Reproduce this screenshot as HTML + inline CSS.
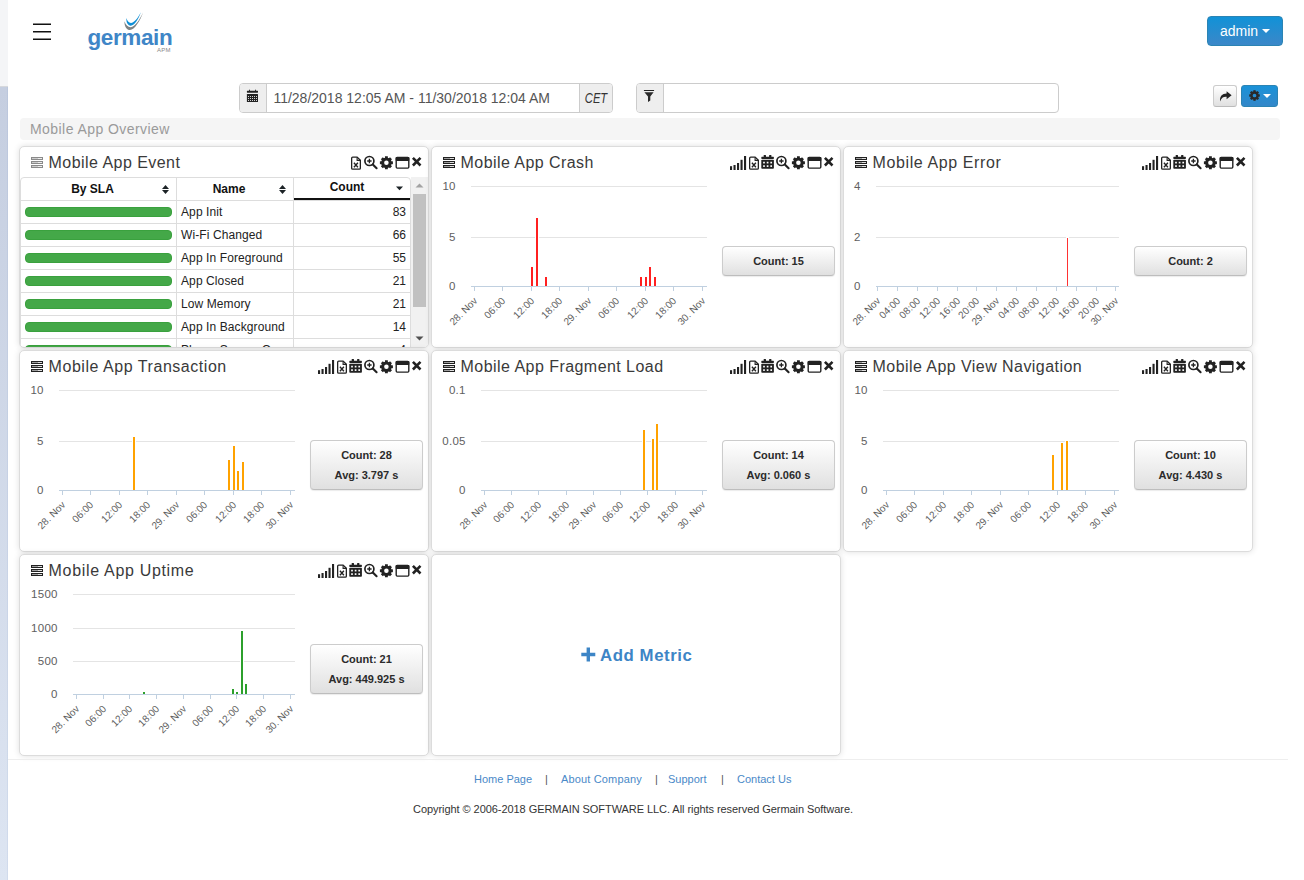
<!DOCTYPE html>
<html lang="en"><head><meta charset="utf-8"><title>Mobile App Overview</title>
<style>
*{box-sizing:border-box}
html,body{margin:0;padding:0}
body{width:1304px;height:880px;overflow:hidden;background:#fff;font-family:"Liberation Sans", Arial, sans-serif;color:#333;position:relative}
.abs{position:absolute}
.panel{position:absolute;width:410px;height:202px;background:#fff;border:1px solid #dcdcdc;border-radius:5px;box-shadow:0 0 6px rgba(0,0,0,.13);overflow:hidden}
.panel>*{position:absolute}
.li{left:11px;top:10px}
.ttl{left:28.600px;top:5.5px;font-size:16px;line-height:20px;white-space:nowrap;color:#3a3a3a;letter-spacing:.33px}
.hic{left:-1px;top:-1px}
.ch{left:-1px;top:-1px}
.stat{left:290px;width:113px;border:1px solid #ccc;border-bottom-color:#bdbdbd;border-radius:4px;background:linear-gradient(#fff,#e0e0e0);font-weight:bold;font-size:11px;line-height:20px;padding:4px 0;text-align:center;color:#2b2b2b;box-shadow:0 1px 1px rgba(0,0,0,.08)}
.tw{left:0;top:30px;width:408px;height:170px;overflow:hidden}
.tb{position:absolute;left:0;top:0;width:391px;border-collapse:separate;border:1px solid #ddd;border-radius:4px 4px 0 0;font-size:12px;table-layout:fixed}
.tb th{height:23px;border-bottom:1px solid #ddd;border-right:1px solid #ddd;font-size:12px;font-weight:bold;color:#111;text-align:center;position:relative;padding:0}
.tb th.cnt{border-right:0;border-bottom:1px solid #ddd;box-shadow:inset 0 -2px 0 #111;height:23px;vertical-align:top;line-height:19.500px}
.tb td{height:23px;border-bottom:1px solid #ddd;border-right:1px solid #ddd;padding:0;line-height:22px}
.tb td:last-child{border-right:0}
.bar{height:10px;width:147px;margin-left:4px;border-radius:4px;background:#44a848;border:1px solid #3aa13e}
.nm{padding-left:4px!important;color:#222;letter-spacing:.1px}
.num{text-align:right;padding-right:4px!important;color:#222}
.srt{position:absolute;right:7px;top:7px}
.sb{position:absolute;left:391px;top:0;width:17px;height:170px;background:#f1f1f1}
.thumb{position:absolute;left:2px;top:17px;width:13px;height:113px;background:#c1c1c1}
.add{left:0;top:0;width:408px;height:200px}
.addt{position:absolute;left:168px;top:88.500px;letter-spacing:.58px;font-size:16.8px;font-weight:bold;color:#3d85c6;line-height:24px;white-space:nowrap}
.ft{font-size:11px;line-height:14px;white-space:nowrap}
</style></head>
<body>

<div class="abs" style="left:0;top:0;width:8px;height:86px;background:#f4f5f7"></div>
<div class="abs" style="left:0;top:86px;width:8px;height:1px;background:#d6d8dc"></div>
<div class="abs" style="left:0;top:87px;width:8px;height:793px;background:linear-gradient(#c5cee0,#dde5f2);box-shadow:inset -1px 0 0 rgba(110,140,190,.10)"></div>
<svg class="abs" style="left:33px;top:20px" width="18" height="24" viewBox="0 0 18 24"><path d="M0 3.400h18v1.700h-18zM0 10.900h18v1.700h-18zM0 18.400h18v1.700h-18z" fill="#111"/></svg>
<div class="abs" style="left:87.500px;top:24.500px;font-size:22.5px;font-weight:bold;color:#3f86c7;letter-spacing:-.4px;line-height:26px">germain</div>
<svg class="abs" style="left:120px;top:8px" width="28" height="26" viewBox="0 0 28 26"><path d="M4.500 13.200C4.200 18.800 7 22 10 22C14.500 22 20 13 23.200 4.300C19.800 11.500 14.800 19.200 10.800 19.200C7.800 19.200 5.600 16.800 4.500 13.200Z" fill="#7d8384"/><path d="M6.400 10.100C6 15.500 8.500 17.800 10.800 17.700C14.500 17.600 18.500 11 20.900 4.300C18 10 14 15 11 15C8.800 15 7.200 13 6.400 10.100Z" fill="#0e8fd6"/></svg>
<div class="abs" style="left:157px;top:47px;font-size:6px;color:#888;line-height:7px;letter-spacing:.2px">APM</div>
<div class="abs" style="left:1207px;top:16px;width:76px;height:30px;border:1px solid #2b84b4;border-radius:4px;background:linear-gradient(#1192d7,#3b87c8);color:#fff;font-size:14px;line-height:28px;padding-left:12px">admin<svg width="8" height="4" viewBox="0 0 8 4" style="position:absolute;left:54px;top:12px"><path d="M0 0h8l-4 4z" fill="#fff"/></svg></div>

<div class="abs" style="left:239px;top:83px;width:374px;height:30px;border:1px solid #ccc;border-radius:4px;background:#fff;overflow:hidden">
 <div class="abs" style="left:0;top:0;width:27px;height:28px;background:#eee;border-right:1px solid #ccc"></div>
 <svg class="abs" style="left:6px;top:5px" width="14" height="15" viewBox="0 0 14 15"><rect x="3.100" y=".7" width=".9" height="1.4" fill="#222"/><rect x="9.100" y=".7" width=".9" height="1.4" fill="#222"/><rect x=".9" y="1.700" width="11.100" height="2" rx=".4" fill="#222"/><rect x=".9" y="5.100" width="11.100" height="7.800" rx=".5" fill="#222"/><rect x="2.05" y="7.05" width=".9" height=".9" fill="#fff"/><rect x="4.05" y="7.05" width=".9" height=".9" fill="#fff"/><rect x="6.05" y="7.05" width=".9" height=".9" fill="#fff"/><rect x="8.05" y="7.05" width=".9" height=".9" fill="#fff"/><rect x="10.05" y="7.05" width=".9" height=".9" fill="#fff"/><rect x="2.05" y="9.05" width=".9" height=".9" fill="#fff"/><rect x="4.05" y="9.05" width=".9" height=".9" fill="#fff"/><rect x="6.05" y="9.05" width=".9" height=".9" fill="#fff"/><rect x="8.05" y="9.05" width=".9" height=".9" fill="#fff"/><rect x="10.05" y="9.05" width=".9" height=".9" fill="#fff"/><rect x="2.05" y="11.05" width=".9" height=".9" fill="#fff"/><rect x="4.05" y="11.05" width=".9" height=".9" fill="#fff"/><rect x="6.05" y="11.05" width=".9" height=".9" fill="#fff"/><rect x="8.05" y="11.05" width=".9" height=".9" fill="#fff"/><rect x="10.05" y="11.05" width=".9" height=".9" fill="#fff"/></svg>
 <div class="abs" style="left:33.400px;top:0;font-size:14px;line-height:28px;color:#555;white-space:nowrap">11/28/2018 12:05 AM - 11/30/2018 12:04 AM</div>
 <div class="abs" style="left:339px;top:0;width:33px;height:28px;background:#eee;border-left:1px solid #ccc;font-style:italic;font-size:14px;line-height:28px;text-align:center;color:#333"><span style="display:inline-block;transform:scaleX(.8);transform-origin:50% 50%">CET</span></div>
</div>
<div class="abs" style="left:636px;top:83px;width:423px;height:30px;border:1px solid #ccc;border-radius:4px;background:#fff;overflow:hidden">
 <div class="abs" style="left:0;top:0;width:27px;height:28px;background:#eee;border-right:1px solid #ccc"></div>
 <svg class="abs" style="left:5px;top:5px" width="14" height="15" viewBox="0 0 14 15"><rect x="1.900" y="1" width="10.200" height="1" rx=".3" fill="#222"/><path d="M2.400 3.200H11.600L8.300 7.600V11.400L6 13V7.600Z" fill="#2a2a2a"/></svg>
</div>
<div class="abs" style="left:1213px;top:85px;width:24px;height:22px;border:1px solid #ccc;border-bottom-color:#bbb;border-radius:3px;background:linear-gradient(#fff,#e0e0e0)">
 <svg class="abs" style="left:5px;top:5px" width="13" height="11" viewBox="0 0 13 11"><path d="M7.600 .2l5 4-5 4v-2.400c-3.200-.2-5.200.8-6.400 4.600-.8-4.800 2-7.800 6.400-7.800z" fill="#222"/></svg>
</div>
<div class="abs" style="left:1241px;top:85px;width:37px;height:22px;border:1px solid #2b84b4;border-radius:3px;background:linear-gradient(#1a92d8,#3387c9)">
 <svg class="abs" style="left:6.200px;top:2.900px" width="13" height="13" viewBox="0 0 13 13"><circle cx="6.5" cy="6.5" r="3.07" fill="none" stroke="#2a2a2a" stroke-width="2.44"/><rect x="5.33" y="1.20" width="2.33" height="2.23" fill="#2a2a2a" transform="rotate(0 6.5 6.5)"/><rect x="5.33" y="1.20" width="2.33" height="2.23" fill="#2a2a2a" transform="rotate(45 6.5 6.5)"/><rect x="5.33" y="1.20" width="2.33" height="2.23" fill="#2a2a2a" transform="rotate(90 6.5 6.5)"/><rect x="5.33" y="1.20" width="2.33" height="2.23" fill="#2a2a2a" transform="rotate(135 6.5 6.5)"/><rect x="5.33" y="1.20" width="2.33" height="2.23" fill="#2a2a2a" transform="rotate(180 6.5 6.5)"/><rect x="5.33" y="1.20" width="2.33" height="2.23" fill="#2a2a2a" transform="rotate(225 6.5 6.5)"/><rect x="5.33" y="1.20" width="2.33" height="2.23" fill="#2a2a2a" transform="rotate(270 6.5 6.5)"/><rect x="5.33" y="1.20" width="2.33" height="2.23" fill="#2a2a2a" transform="rotate(315 6.5 6.5)"/></svg>
 <svg class="abs" style="left:20.600px;top:7.900px" width="8" height="4" viewBox="0 0 8 4"><path d="M0 0h8l-4 4z" fill="#fff"/></svg>
</div>
<div class="abs" style="left:20px;top:118px;width:1260px;height:22px;background:#f5f5f5;border-radius:4px;font-size:14px;line-height:22px;padding-left:10px;color:#9a9a9a;letter-spacing:.44px">Mobile App Overview</div>
<div class="panel" style="left:19px;top:146px"><svg class="li" width="14" height="13" viewBox="0 0 14 13"><rect x="0" y="0" width="12" height="3" fill="#8a8a8a"/><rect x="1" y="1" width="10" height="1" fill="#fff" opacity=".85"/><rect x="1" y="1" width="6" height="1" fill="#8a8a8a" opacity=".35"/><rect x="0" y="4" width="12" height="3" fill="#8a8a8a"/><rect x="1" y="5" width="10" height="1" fill="#fff" opacity=".85"/><rect x="1" y="5" width="6" height="1" fill="#8a8a8a" opacity=".35"/><rect x="0" y="8" width="12" height="3" fill="#8a8a8a"/><rect x="1" y="9" width="10" height="1" fill="#fff" opacity=".85"/><rect x="1" y="9" width="6" height="1" fill="#8a8a8a" opacity=".35"/></svg><div class="ttl" style="letter-spacing:0.45px">Mobile App Event</div><svg class="hic" width="410" height="30" viewBox="0 0 410 30"><path d="M333.6 11.15h4.600l3.150 3.150v7.900a1 1 0 0 1 -1 1h-6.700a1 1 0 0 1 -1 -1v-10a1 1 0 0 1 1 -1z" fill="none" stroke="#222" stroke-width="1.3" stroke-linejoin="round"/><path d="M338.1 11.3v3.100h3.100" fill="none" stroke="#222" stroke-width="1.1"/><path d="M334.9 16.8l4 4.500m0-4.500l-4 4.500" stroke="#222" stroke-width="1.35" fill="none"/><circle cx="350.4" cy="15.0" r="4.5" fill="none" stroke="#222" stroke-width="1.7"/><path d="M353.8 18.4L357.6 22.2" stroke="#222" stroke-width="2.1" stroke-linecap="round"/><path d="M348.2 15.0h4.4M350.4 12.8v4.4" stroke="#222" stroke-width="1.3"/><circle cx="367.4" cy="16.75" r="3.77" fill="none" stroke="#222" stroke-width="2.99"/><rect x="365.97" y="10.25" width="2.86" height="2.73" fill="#222" transform="rotate(0 367.4 16.75)"/><rect x="365.97" y="10.25" width="2.86" height="2.73" fill="#222" transform="rotate(45 367.4 16.75)"/><rect x="365.97" y="10.25" width="2.86" height="2.73" fill="#222" transform="rotate(90 367.4 16.75)"/><rect x="365.97" y="10.25" width="2.86" height="2.73" fill="#222" transform="rotate(135 367.4 16.75)"/><rect x="365.97" y="10.25" width="2.86" height="2.73" fill="#222" transform="rotate(180 367.4 16.75)"/><rect x="365.97" y="10.25" width="2.86" height="2.73" fill="#222" transform="rotate(225 367.4 16.75)"/><rect x="365.97" y="10.25" width="2.86" height="2.73" fill="#222" transform="rotate(270 367.4 16.75)"/><rect x="365.97" y="10.25" width="2.86" height="2.73" fill="#222" transform="rotate(315 367.4 16.75)"/><rect x="377.2" y="11.5" width="12.6" height="10.6" rx="1" fill="none" stroke="#222" stroke-width="1.4"/><rect x="376.7" y="11.0" width="13.6" height="4" rx=".8" fill="#222"/><path d="M393.90000000000003 11.9l7.6 7.6m0-7.6l-7.6 7.6" stroke="#222" stroke-width="2.6" fill="none"/></svg><div class="tw"><table class="tb" cellspacing="0"><tr><th style="width:156px"><span style="position:relative;left:-6px">By SLA</span><svg class="srt" width="7" height="9" viewBox="0 0 7 9"><path d="M0 3.900l3.500-3.900 3.500 3.900zM0 5.100l3.500 3.900 3.500-3.900z" fill="#1c2326"/></svg></th><th style="width:117px"><span style="position:relative;left:-6px">Name</span><svg class="srt" width="7" height="9" viewBox="0 0 7 9"><path d="M0 3.900l3.500-3.900 3.500 3.900zM0 5.100l3.500 3.900 3.500-3.900z" fill="#1c2326"/></svg></th><th class="cnt"><span style="position:relative;left:-5px">Count</span><svg class="srt" style="top:8px" width="7" height="5" viewBox="0 0 7 5"><path d="M0 .5l3.500 3.800 3.500-3.800z" fill="#1c2326"/></svg></th></tr><tr><td><div class="bar"></div></td><td class="nm">App Init</td><td class="num">83</td></tr><tr><td><div class="bar"></div></td><td class="nm">Wi-Fi Changed</td><td class="num">66</td></tr><tr><td><div class="bar"></div></td><td class="nm">App In Foreground</td><td class="num">55</td></tr><tr><td><div class="bar"></div></td><td class="nm">App Closed</td><td class="num">21</td></tr><tr><td><div class="bar"></div></td><td class="nm">Low Memory</td><td class="num">21</td></tr><tr><td><div class="bar"></div></td><td class="nm">App In Background</td><td class="num">14</td></tr><tr><td><div class="bar"></div></td><td class="nm">Phone Screen On</td><td class="num">4</td></tr></table><div class="sb"><svg width="17" height="17" viewBox="0 0 17 17" style="position:absolute;left:0;top:0"><path d="M4.5 10.5l4-4 4 4z" fill="#a3a3a3"/></svg><div class="thumb"></div><svg width="17" height="17" viewBox="0 0 17 17" style="position:absolute;left:0;bottom:0"><path d="M4.5 6.5l4 4 4-4z" fill="#505050"/></svg></div></div></div><div class="panel" style="left:431px;top:146px"><svg class="li" width="14" height="13" viewBox="0 0 14 13"><rect x="0" y="0" width="12" height="3" fill="#222"/><rect x="1" y="1" width="10" height="1" fill="#fff" opacity=".85"/><rect x="1" y="1" width="6" height="1" fill="#222" opacity=".35"/><rect x="0" y="4" width="12" height="3" fill="#222"/><rect x="1" y="5" width="10" height="1" fill="#fff" opacity=".85"/><rect x="1" y="5" width="6" height="1" fill="#222" opacity=".35"/><rect x="0" y="8" width="12" height="3" fill="#222"/><rect x="1" y="9" width="10" height="1" fill="#fff" opacity=".85"/><rect x="1" y="9" width="6" height="1" fill="#222" opacity=".35"/></svg><div class="ttl" style="letter-spacing:0.43px">Mobile App Crash</div><svg class="hic" width="410" height="30" viewBox="0 0 410 30"><rect x="299.0" y="20.2" width="2.1" height="3.8" fill="#222"/><rect x="302.5" y="19.0" width="2.1" height="5" fill="#222"/><rect x="306.0" y="17.0" width="2.1" height="7" fill="#222"/><rect x="309.5" y="13.8" width="2.1" height="10.2" fill="#222"/><rect x="313.0" y="10.0" width="2.1" height="14" fill="#222"/><path d="M319.6 11.15h4.600l3.150 3.150v7.900a1 1 0 0 1 -1 1h-6.700a1 1 0 0 1 -1 -1v-10a1 1 0 0 1 1 -1z" fill="none" stroke="#222" stroke-width="1.3" stroke-linejoin="round"/><path d="M324.1 11.3v3.100h3.100" fill="none" stroke="#222" stroke-width="1.1"/><path d="M320.9 16.8l4 4.500m0-4.500l-4 4.500" stroke="#222" stroke-width="1.35" fill="none"/><g transform="translate(330.3 9.1) scale(1 1.0)"><rect x="2.4" y="0" width="2.3" height="2.6" rx=".5" fill="#222"/><rect x="7.800" y="0" width="2.3" height="2.6" rx=".5" fill="#222"/><rect x="0" y="1.7" width="12.6" height="2.1" rx=".6" fill="#222"/><rect x="0" y="4.700" width="12.6" height="9" rx=".8" fill="#222"/><rect x="1.85" y="6.65" width="1.7" height="1.7" fill="#fff"/><rect x="5.45" y="6.65" width="1.7" height="1.7" fill="#fff"/><rect x="9.05" y="6.65" width="1.7" height="1.7" fill="#fff"/><rect x="1.85" y="10.15" width="1.7" height="1.7" fill="#fff"/><rect x="5.45" y="10.15" width="1.7" height="1.7" fill="#fff"/><rect x="9.05" y="10.15" width="1.7" height="1.7" fill="#fff"/></g><circle cx="350.4" cy="15.0" r="4.5" fill="none" stroke="#222" stroke-width="1.7"/><path d="M353.8 18.4L357.6 22.2" stroke="#222" stroke-width="2.1" stroke-linecap="round"/><path d="M348.2 15.0h4.4M350.4 12.8v4.4" stroke="#222" stroke-width="1.3"/><circle cx="367.4" cy="16.75" r="3.77" fill="none" stroke="#222" stroke-width="2.99"/><rect x="365.97" y="10.25" width="2.86" height="2.73" fill="#222" transform="rotate(0 367.4 16.75)"/><rect x="365.97" y="10.25" width="2.86" height="2.73" fill="#222" transform="rotate(45 367.4 16.75)"/><rect x="365.97" y="10.25" width="2.86" height="2.73" fill="#222" transform="rotate(90 367.4 16.75)"/><rect x="365.97" y="10.25" width="2.86" height="2.73" fill="#222" transform="rotate(135 367.4 16.75)"/><rect x="365.97" y="10.25" width="2.86" height="2.73" fill="#222" transform="rotate(180 367.4 16.75)"/><rect x="365.97" y="10.25" width="2.86" height="2.73" fill="#222" transform="rotate(225 367.4 16.75)"/><rect x="365.97" y="10.25" width="2.86" height="2.73" fill="#222" transform="rotate(270 367.4 16.75)"/><rect x="365.97" y="10.25" width="2.86" height="2.73" fill="#222" transform="rotate(315 367.4 16.75)"/><rect x="377.2" y="11.5" width="12.6" height="10.6" rx="1" fill="none" stroke="#222" stroke-width="1.4"/><rect x="376.7" y="11.0" width="13.6" height="4" rx=".8" fill="#222"/><path d="M393.90000000000003 11.9l7.6 7.6m0-7.6l-7.6 7.6" stroke="#222" stroke-width="2.6" fill="none"/></svg><svg class="ch" width="410" height="202" viewBox="0 0 410 202"><rect x="40" y="40" width="236" height="1" fill="#e4e4e4"/><rect x="40" y="91" width="236" height="1" fill="#e4e4e4"/><rect x="99" y="120" width="4" height="20" fill="#fff"/><rect x="104" y="71" width="4" height="69" fill="#fff"/><rect x="113" y="130" width="4" height="10" fill="#fff"/><rect x="208" y="130" width="4" height="10" fill="#fff"/><rect x="213" y="130" width="4" height="10" fill="#fff"/><rect x="217" y="120" width="4" height="20" fill="#fff"/><rect x="222" y="130" width="4" height="10" fill="#fff"/><rect x="100" y="121" width="2" height="19" fill="#ff2020"/><rect x="105" y="72" width="2" height="68" fill="#ff2020"/><rect x="114" y="131" width="2" height="9" fill="#ff2020"/><rect x="209" y="131" width="2" height="9" fill="#ff2020"/><rect x="214" y="131" width="2" height="9" fill="#ff2020"/><rect x="218" y="121" width="2" height="19" fill="#ff2020"/><rect x="223" y="131" width="2" height="9" fill="#ff2020"/><rect x="40" y="140" width="236" height="1" fill="#c0d0e0"/><rect x="43" y="141" width="1" height="4" fill="#c0d0e0"/><rect x="71" y="141" width="1" height="4" fill="#c0d0e0"/><rect x="100" y="141" width="1" height="4" fill="#c0d0e0"/><rect x="128" y="141" width="1" height="4" fill="#c0d0e0"/><rect x="157" y="141" width="1" height="4" fill="#c0d0e0"/><rect x="185" y="141" width="1" height="4" fill="#c0d0e0"/><rect x="214" y="141" width="1" height="4" fill="#c0d0e0"/><rect x="242" y="141" width="1" height="4" fill="#c0d0e0"/><rect x="271" y="141" width="1" height="4" fill="#c0d0e0"/><g font-size="11" fill="#606060"><text x="24.8" y="44.4" font-size="11.5" letter-spacing=".3" text-anchor="end">10</text><text x="24.8" y="95.4" font-size="11.5" letter-spacing=".3" text-anchor="end">5</text><text x="24.8" y="144.4" font-size="11.5" letter-spacing=".3" text-anchor="end">0</text><text x="47" y="155.5" font-size="10" text-anchor="end" transform="rotate(-45 47 155.5)">28. Nov</text><text x="75" y="155.5" font-size="10" text-anchor="end" transform="rotate(-45 75 155.5)">06:00</text><text x="104" y="155.5" font-size="10" text-anchor="end" transform="rotate(-45 104 155.5)">12:00</text><text x="132" y="155.5" font-size="10" text-anchor="end" transform="rotate(-45 132 155.5)">18:00</text><text x="161" y="155.5" font-size="10" text-anchor="end" transform="rotate(-45 161 155.5)">29. Nov</text><text x="189" y="155.5" font-size="10" text-anchor="end" transform="rotate(-45 189 155.5)">06:00</text><text x="218" y="155.5" font-size="10" text-anchor="end" transform="rotate(-45 218 155.5)">12:00</text><text x="246" y="155.5" font-size="10" text-anchor="end" transform="rotate(-45 246 155.5)">18:00</text><text x="275" y="155.5" font-size="10" text-anchor="end" transform="rotate(-45 275 155.5)">30. Nov</text></g></svg><div class="stat" style="top:99px;height:30px">Count: 15</div></div><div class="panel" style="left:843px;top:146px"><svg class="li" width="14" height="13" viewBox="0 0 14 13"><rect x="0" y="0" width="12" height="3" fill="#222"/><rect x="1" y="1" width="10" height="1" fill="#fff" opacity=".85"/><rect x="1" y="1" width="6" height="1" fill="#222" opacity=".35"/><rect x="0" y="4" width="12" height="3" fill="#222"/><rect x="1" y="5" width="10" height="1" fill="#fff" opacity=".85"/><rect x="1" y="5" width="6" height="1" fill="#222" opacity=".35"/><rect x="0" y="8" width="12" height="3" fill="#222"/><rect x="1" y="9" width="10" height="1" fill="#fff" opacity=".85"/><rect x="1" y="9" width="6" height="1" fill="#222" opacity=".35"/></svg><div class="ttl" style="letter-spacing:0.6px">Mobile App Error</div><svg class="hic" width="410" height="30" viewBox="0 0 410 30"><rect x="299.0" y="20.2" width="2.1" height="3.8" fill="#222"/><rect x="302.5" y="19.0" width="2.1" height="5" fill="#222"/><rect x="306.0" y="17.0" width="2.1" height="7" fill="#222"/><rect x="309.5" y="13.8" width="2.1" height="10.2" fill="#222"/><rect x="313.0" y="10.0" width="2.1" height="14" fill="#222"/><path d="M319.6 11.15h4.600l3.150 3.150v7.900a1 1 0 0 1 -1 1h-6.700a1 1 0 0 1 -1 -1v-10a1 1 0 0 1 1 -1z" fill="none" stroke="#222" stroke-width="1.3" stroke-linejoin="round"/><path d="M324.1 11.3v3.100h3.100" fill="none" stroke="#222" stroke-width="1.1"/><path d="M320.9 16.8l4 4.500m0-4.500l-4 4.500" stroke="#222" stroke-width="1.35" fill="none"/><g transform="translate(330.3 9.1) scale(1 1.0)"><rect x="2.4" y="0" width="2.3" height="2.6" rx=".5" fill="#222"/><rect x="7.800" y="0" width="2.3" height="2.6" rx=".5" fill="#222"/><rect x="0" y="1.7" width="12.6" height="2.1" rx=".6" fill="#222"/><rect x="0" y="4.700" width="12.6" height="9" rx=".8" fill="#222"/><rect x="1.85" y="6.65" width="1.7" height="1.7" fill="#fff"/><rect x="5.45" y="6.65" width="1.7" height="1.7" fill="#fff"/><rect x="9.05" y="6.65" width="1.7" height="1.7" fill="#fff"/><rect x="1.85" y="10.15" width="1.7" height="1.7" fill="#fff"/><rect x="5.45" y="10.15" width="1.7" height="1.7" fill="#fff"/><rect x="9.05" y="10.15" width="1.7" height="1.7" fill="#fff"/></g><circle cx="350.4" cy="15.0" r="4.5" fill="none" stroke="#222" stroke-width="1.7"/><path d="M353.8 18.4L357.6 22.2" stroke="#222" stroke-width="2.1" stroke-linecap="round"/><path d="M348.2 15.0h4.4M350.4 12.8v4.4" stroke="#222" stroke-width="1.3"/><circle cx="367.4" cy="16.75" r="3.77" fill="none" stroke="#222" stroke-width="2.99"/><rect x="365.97" y="10.25" width="2.86" height="2.73" fill="#222" transform="rotate(0 367.4 16.75)"/><rect x="365.97" y="10.25" width="2.86" height="2.73" fill="#222" transform="rotate(45 367.4 16.75)"/><rect x="365.97" y="10.25" width="2.86" height="2.73" fill="#222" transform="rotate(90 367.4 16.75)"/><rect x="365.97" y="10.25" width="2.86" height="2.73" fill="#222" transform="rotate(135 367.4 16.75)"/><rect x="365.97" y="10.25" width="2.86" height="2.73" fill="#222" transform="rotate(180 367.4 16.75)"/><rect x="365.97" y="10.25" width="2.86" height="2.73" fill="#222" transform="rotate(225 367.4 16.75)"/><rect x="365.97" y="10.25" width="2.86" height="2.73" fill="#222" transform="rotate(270 367.4 16.75)"/><rect x="365.97" y="10.25" width="2.86" height="2.73" fill="#222" transform="rotate(315 367.4 16.75)"/><rect x="377.2" y="11.5" width="12.6" height="10.6" rx="1" fill="none" stroke="#222" stroke-width="1.4"/><rect x="376.7" y="11.0" width="13.6" height="4" rx=".8" fill="#222"/><path d="M393.90000000000003 11.9l7.6 7.6m0-7.6l-7.6 7.6" stroke="#222" stroke-width="2.6" fill="none"/></svg><svg class="ch" width="410" height="202" viewBox="0 0 410 202"><rect x="33" y="40" width="243" height="1" fill="#e4e4e4"/><rect x="33" y="91" width="243" height="1" fill="#e4e4e4"/><rect x="223" y="91" width="3" height="49" fill="#fff"/><rect x="224" y="92" width="1" height="48" fill="#ff3232"/><rect x="33" y="140" width="243" height="1" fill="#c0d0e0"/><rect x="34" y="141" width="1" height="4" fill="#c0d0e0"/><rect x="54" y="141" width="1" height="4" fill="#c0d0e0"/><rect x="74" y="141" width="1" height="4" fill="#c0d0e0"/><rect x="94" y="141" width="1" height="4" fill="#c0d0e0"/><rect x="114" y="141" width="1" height="4" fill="#c0d0e0"/><rect x="133" y="141" width="1" height="4" fill="#c0d0e0"/><rect x="153" y="141" width="1" height="4" fill="#c0d0e0"/><rect x="173" y="141" width="1" height="4" fill="#c0d0e0"/><rect x="193" y="141" width="1" height="4" fill="#c0d0e0"/><rect x="213" y="141" width="1" height="4" fill="#c0d0e0"/><rect x="233" y="141" width="1" height="4" fill="#c0d0e0"/><rect x="253" y="141" width="1" height="4" fill="#c0d0e0"/><rect x="272" y="141" width="1" height="4" fill="#c0d0e0"/><g font-size="11" fill="#606060"><text x="17.8" y="44.4" font-size="11.5" letter-spacing=".3" text-anchor="end">4</text><text x="17.8" y="95.4" font-size="11.5" letter-spacing=".3" text-anchor="end">2</text><text x="17.8" y="144.4" font-size="11.5" letter-spacing=".3" text-anchor="end">0</text><text x="38" y="155.5" font-size="10" text-anchor="end" transform="rotate(-45 38 155.5)">28. Nov</text><text x="58" y="155.5" font-size="10" text-anchor="end" transform="rotate(-45 58 155.5)">04:00</text><text x="78" y="155.5" font-size="10" text-anchor="end" transform="rotate(-45 78 155.5)">08:00</text><text x="98" y="155.5" font-size="10" text-anchor="end" transform="rotate(-45 98 155.5)">12:00</text><text x="118" y="155.5" font-size="10" text-anchor="end" transform="rotate(-45 118 155.5)">16:00</text><text x="137" y="155.5" font-size="10" text-anchor="end" transform="rotate(-45 137 155.5)">20:00</text><text x="157" y="155.5" font-size="10" text-anchor="end" transform="rotate(-45 157 155.5)">29. Nov</text><text x="177" y="155.5" font-size="10" text-anchor="end" transform="rotate(-45 177 155.5)">04:00</text><text x="197" y="155.5" font-size="10" text-anchor="end" transform="rotate(-45 197 155.5)">08:00</text><text x="217" y="155.5" font-size="10" text-anchor="end" transform="rotate(-45 217 155.5)">12:00</text><text x="237" y="155.5" font-size="10" text-anchor="end" transform="rotate(-45 237 155.5)">16:00</text><text x="257" y="155.5" font-size="10" text-anchor="end" transform="rotate(-45 257 155.5)">20:00</text><text x="276" y="155.5" font-size="10" text-anchor="end" transform="rotate(-45 276 155.5)">30. Nov</text></g></svg><div class="stat" style="top:99px;height:30px">Count: 2</div></div><div class="panel" style="left:19px;top:350px"><svg class="li" width="14" height="13" viewBox="0 0 14 13"><rect x="0" y="0" width="12" height="3" fill="#222"/><rect x="1" y="1" width="10" height="1" fill="#fff" opacity=".85"/><rect x="1" y="1" width="6" height="1" fill="#222" opacity=".35"/><rect x="0" y="4" width="12" height="3" fill="#222"/><rect x="1" y="5" width="10" height="1" fill="#fff" opacity=".85"/><rect x="1" y="5" width="6" height="1" fill="#222" opacity=".35"/><rect x="0" y="8" width="12" height="3" fill="#222"/><rect x="1" y="9" width="10" height="1" fill="#fff" opacity=".85"/><rect x="1" y="9" width="6" height="1" fill="#222" opacity=".35"/></svg><div class="ttl" style="letter-spacing:0.54px">Mobile App Transaction</div><svg class="hic" width="410" height="30" viewBox="0 0 410 30"><rect x="299.0" y="20.2" width="2.1" height="3.8" fill="#222"/><rect x="302.5" y="19.0" width="2.1" height="5" fill="#222"/><rect x="306.0" y="17.0" width="2.1" height="7" fill="#222"/><rect x="309.5" y="13.8" width="2.1" height="10.2" fill="#222"/><rect x="313.0" y="10.0" width="2.1" height="14" fill="#222"/><path d="M319.6 11.15h4.600l3.150 3.150v7.900a1 1 0 0 1 -1 1h-6.700a1 1 0 0 1 -1 -1v-10a1 1 0 0 1 1 -1z" fill="none" stroke="#222" stroke-width="1.3" stroke-linejoin="round"/><path d="M324.1 11.3v3.100h3.100" fill="none" stroke="#222" stroke-width="1.1"/><path d="M320.9 16.8l4 4.500m0-4.500l-4 4.500" stroke="#222" stroke-width="1.35" fill="none"/><g transform="translate(330.3 9.1) scale(1 1.0)"><rect x="2.4" y="0" width="2.3" height="2.6" rx=".5" fill="#222"/><rect x="7.800" y="0" width="2.3" height="2.6" rx=".5" fill="#222"/><rect x="0" y="1.7" width="12.6" height="2.1" rx=".6" fill="#222"/><rect x="0" y="4.700" width="12.6" height="9" rx=".8" fill="#222"/><rect x="1.85" y="6.65" width="1.7" height="1.7" fill="#fff"/><rect x="5.45" y="6.65" width="1.7" height="1.7" fill="#fff"/><rect x="9.05" y="6.65" width="1.7" height="1.7" fill="#fff"/><rect x="1.85" y="10.15" width="1.7" height="1.7" fill="#fff"/><rect x="5.45" y="10.15" width="1.7" height="1.7" fill="#fff"/><rect x="9.05" y="10.15" width="1.7" height="1.7" fill="#fff"/></g><circle cx="350.4" cy="15.0" r="4.5" fill="none" stroke="#222" stroke-width="1.7"/><path d="M353.8 18.4L357.6 22.2" stroke="#222" stroke-width="2.1" stroke-linecap="round"/><path d="M348.2 15.0h4.4M350.4 12.8v4.4" stroke="#222" stroke-width="1.3"/><circle cx="367.4" cy="16.75" r="3.77" fill="none" stroke="#222" stroke-width="2.99"/><rect x="365.97" y="10.25" width="2.86" height="2.73" fill="#222" transform="rotate(0 367.4 16.75)"/><rect x="365.97" y="10.25" width="2.86" height="2.73" fill="#222" transform="rotate(45 367.4 16.75)"/><rect x="365.97" y="10.25" width="2.86" height="2.73" fill="#222" transform="rotate(90 367.4 16.75)"/><rect x="365.97" y="10.25" width="2.86" height="2.73" fill="#222" transform="rotate(135 367.4 16.75)"/><rect x="365.97" y="10.25" width="2.86" height="2.73" fill="#222" transform="rotate(180 367.4 16.75)"/><rect x="365.97" y="10.25" width="2.86" height="2.73" fill="#222" transform="rotate(225 367.4 16.75)"/><rect x="365.97" y="10.25" width="2.86" height="2.73" fill="#222" transform="rotate(270 367.4 16.75)"/><rect x="365.97" y="10.25" width="2.86" height="2.73" fill="#222" transform="rotate(315 367.4 16.75)"/><rect x="377.2" y="11.5" width="12.6" height="10.6" rx="1" fill="none" stroke="#222" stroke-width="1.4"/><rect x="376.7" y="11.0" width="13.6" height="4" rx=".8" fill="#222"/><path d="M393.90000000000003 11.9l7.6 7.6m0-7.6l-7.6 7.6" stroke="#222" stroke-width="2.6" fill="none"/></svg><svg class="ch" width="410" height="202" viewBox="0 0 410 202"><rect x="40" y="40" width="236" height="1" fill="#e4e4e4"/><rect x="40" y="91" width="236" height="1" fill="#e4e4e4"/><rect x="113" y="86" width="4" height="54" fill="#fff"/><rect x="208" y="109" width="4" height="31" fill="#fff"/><rect x="213" y="95" width="4" height="45" fill="#fff"/><rect x="217" y="120" width="4" height="20" fill="#fff"/><rect x="222" y="111" width="4" height="29" fill="#fff"/><rect x="114" y="87" width="2" height="53" fill="#ffa200"/><rect x="209" y="110" width="2" height="30" fill="#ffa200"/><rect x="214" y="96" width="2" height="44" fill="#ffa200"/><rect x="218" y="121" width="2" height="19" fill="#ffa200"/><rect x="223" y="112" width="2" height="28" fill="#ffa200"/><rect x="40" y="140" width="236" height="1" fill="#c0d0e0"/><rect x="43" y="141" width="1" height="4" fill="#c0d0e0"/><rect x="71" y="141" width="1" height="4" fill="#c0d0e0"/><rect x="100" y="141" width="1" height="4" fill="#c0d0e0"/><rect x="128" y="141" width="1" height="4" fill="#c0d0e0"/><rect x="157" y="141" width="1" height="4" fill="#c0d0e0"/><rect x="185" y="141" width="1" height="4" fill="#c0d0e0"/><rect x="214" y="141" width="1" height="4" fill="#c0d0e0"/><rect x="242" y="141" width="1" height="4" fill="#c0d0e0"/><rect x="271" y="141" width="1" height="4" fill="#c0d0e0"/><g font-size="11" fill="#606060"><text x="24.8" y="44.4" font-size="11.5" letter-spacing=".3" text-anchor="end">10</text><text x="24.8" y="95.4" font-size="11.5" letter-spacing=".3" text-anchor="end">5</text><text x="24.8" y="144.4" font-size="11.5" letter-spacing=".3" text-anchor="end">0</text><text x="47" y="155.5" font-size="10" text-anchor="end" transform="rotate(-45 47 155.5)">28. Nov</text><text x="75" y="155.5" font-size="10" text-anchor="end" transform="rotate(-45 75 155.5)">06:00</text><text x="104" y="155.5" font-size="10" text-anchor="end" transform="rotate(-45 104 155.5)">12:00</text><text x="132" y="155.5" font-size="10" text-anchor="end" transform="rotate(-45 132 155.5)">18:00</text><text x="161" y="155.5" font-size="10" text-anchor="end" transform="rotate(-45 161 155.5)">29. Nov</text><text x="189" y="155.5" font-size="10" text-anchor="end" transform="rotate(-45 189 155.5)">06:00</text><text x="218" y="155.5" font-size="10" text-anchor="end" transform="rotate(-45 218 155.5)">12:00</text><text x="246" y="155.5" font-size="10" text-anchor="end" transform="rotate(-45 246 155.5)">18:00</text><text x="275" y="155.5" font-size="10" text-anchor="end" transform="rotate(-45 275 155.5)">30. Nov</text></g></svg><div class="stat" style="top:89px;height:50px">Count: 28<br>Avg: 3.797 s</div></div><div class="panel" style="left:431px;top:350px"><svg class="li" width="14" height="13" viewBox="0 0 14 13"><rect x="0" y="0" width="12" height="3" fill="#222"/><rect x="1" y="1" width="10" height="1" fill="#fff" opacity=".85"/><rect x="1" y="1" width="6" height="1" fill="#222" opacity=".35"/><rect x="0" y="4" width="12" height="3" fill="#222"/><rect x="1" y="5" width="10" height="1" fill="#fff" opacity=".85"/><rect x="1" y="5" width="6" height="1" fill="#222" opacity=".35"/><rect x="0" y="8" width="12" height="3" fill="#222"/><rect x="1" y="9" width="10" height="1" fill="#fff" opacity=".85"/><rect x="1" y="9" width="6" height="1" fill="#222" opacity=".35"/></svg><div class="ttl" style="letter-spacing:0.45px">Mobile App Fragment Load</div><svg class="hic" width="410" height="30" viewBox="0 0 410 30"><rect x="299.0" y="20.2" width="2.1" height="3.8" fill="#222"/><rect x="302.5" y="19.0" width="2.1" height="5" fill="#222"/><rect x="306.0" y="17.0" width="2.1" height="7" fill="#222"/><rect x="309.5" y="13.8" width="2.1" height="10.2" fill="#222"/><rect x="313.0" y="10.0" width="2.1" height="14" fill="#222"/><path d="M319.6 11.15h4.600l3.150 3.150v7.900a1 1 0 0 1 -1 1h-6.700a1 1 0 0 1 -1 -1v-10a1 1 0 0 1 1 -1z" fill="none" stroke="#222" stroke-width="1.3" stroke-linejoin="round"/><path d="M324.1 11.3v3.100h3.100" fill="none" stroke="#222" stroke-width="1.1"/><path d="M320.9 16.8l4 4.500m0-4.500l-4 4.500" stroke="#222" stroke-width="1.35" fill="none"/><g transform="translate(330.3 9.1) scale(1 1.0)"><rect x="2.4" y="0" width="2.3" height="2.6" rx=".5" fill="#222"/><rect x="7.800" y="0" width="2.3" height="2.6" rx=".5" fill="#222"/><rect x="0" y="1.7" width="12.6" height="2.1" rx=".6" fill="#222"/><rect x="0" y="4.700" width="12.6" height="9" rx=".8" fill="#222"/><rect x="1.85" y="6.65" width="1.7" height="1.7" fill="#fff"/><rect x="5.45" y="6.65" width="1.7" height="1.7" fill="#fff"/><rect x="9.05" y="6.65" width="1.7" height="1.7" fill="#fff"/><rect x="1.85" y="10.15" width="1.7" height="1.7" fill="#fff"/><rect x="5.45" y="10.15" width="1.7" height="1.7" fill="#fff"/><rect x="9.05" y="10.15" width="1.7" height="1.7" fill="#fff"/></g><circle cx="350.4" cy="15.0" r="4.5" fill="none" stroke="#222" stroke-width="1.7"/><path d="M353.8 18.4L357.6 22.2" stroke="#222" stroke-width="2.1" stroke-linecap="round"/><path d="M348.2 15.0h4.4M350.4 12.8v4.4" stroke="#222" stroke-width="1.3"/><circle cx="367.4" cy="16.75" r="3.77" fill="none" stroke="#222" stroke-width="2.99"/><rect x="365.97" y="10.25" width="2.86" height="2.73" fill="#222" transform="rotate(0 367.4 16.75)"/><rect x="365.97" y="10.25" width="2.86" height="2.73" fill="#222" transform="rotate(45 367.4 16.75)"/><rect x="365.97" y="10.25" width="2.86" height="2.73" fill="#222" transform="rotate(90 367.4 16.75)"/><rect x="365.97" y="10.25" width="2.86" height="2.73" fill="#222" transform="rotate(135 367.4 16.75)"/><rect x="365.97" y="10.25" width="2.86" height="2.73" fill="#222" transform="rotate(180 367.4 16.75)"/><rect x="365.97" y="10.25" width="2.86" height="2.73" fill="#222" transform="rotate(225 367.4 16.75)"/><rect x="365.97" y="10.25" width="2.86" height="2.73" fill="#222" transform="rotate(270 367.4 16.75)"/><rect x="365.97" y="10.25" width="2.86" height="2.73" fill="#222" transform="rotate(315 367.4 16.75)"/><rect x="377.2" y="11.5" width="12.6" height="10.6" rx="1" fill="none" stroke="#222" stroke-width="1.4"/><rect x="376.7" y="11.0" width="13.6" height="4" rx=".8" fill="#222"/><path d="M393.90000000000003 11.9l7.6 7.6m0-7.6l-7.6 7.6" stroke="#222" stroke-width="2.6" fill="none"/></svg><svg class="ch" width="410" height="202" viewBox="0 0 410 202"><rect x="50" y="40" width="226" height="1" fill="#e4e4e4"/><rect x="50" y="91" width="226" height="1" fill="#e4e4e4"/><rect x="211" y="79" width="4" height="61" fill="#fff"/><rect x="220" y="88" width="4" height="52" fill="#fff"/><rect x="224" y="73" width="4" height="67" fill="#fff"/><rect x="212" y="80" width="2" height="60" fill="#ffa200"/><rect x="221" y="89" width="2" height="51" fill="#ffa200"/><rect x="225" y="74" width="2" height="66" fill="#ffa200"/><rect x="50" y="140" width="226" height="1" fill="#c0d0e0"/><rect x="53" y="141" width="1" height="4" fill="#c0d0e0"/><rect x="80" y="141" width="1" height="4" fill="#c0d0e0"/><rect x="107" y="141" width="1" height="4" fill="#c0d0e0"/><rect x="135" y="141" width="1" height="4" fill="#c0d0e0"/><rect x="162" y="141" width="1" height="4" fill="#c0d0e0"/><rect x="189" y="141" width="1" height="4" fill="#c0d0e0"/><rect x="216" y="141" width="1" height="4" fill="#c0d0e0"/><rect x="244" y="141" width="1" height="4" fill="#c0d0e0"/><rect x="271" y="141" width="1" height="4" fill="#c0d0e0"/><g font-size="11" fill="#606060"><text x="34.8" y="44.4" font-size="11.5" letter-spacing=".3" text-anchor="end">0.1</text><text x="34.8" y="95.4" font-size="11.5" letter-spacing=".3" text-anchor="end">0.05</text><text x="34.8" y="144.4" font-size="11.5" letter-spacing=".3" text-anchor="end">0</text><text x="57" y="155.5" font-size="10" text-anchor="end" transform="rotate(-45 57 155.5)">28. Nov</text><text x="84" y="155.5" font-size="10" text-anchor="end" transform="rotate(-45 84 155.5)">06:00</text><text x="111" y="155.5" font-size="10" text-anchor="end" transform="rotate(-45 111 155.5)">12:00</text><text x="139" y="155.5" font-size="10" text-anchor="end" transform="rotate(-45 139 155.5)">18:00</text><text x="166" y="155.5" font-size="10" text-anchor="end" transform="rotate(-45 166 155.5)">29. Nov</text><text x="193" y="155.5" font-size="10" text-anchor="end" transform="rotate(-45 193 155.5)">06:00</text><text x="220" y="155.5" font-size="10" text-anchor="end" transform="rotate(-45 220 155.5)">12:00</text><text x="248" y="155.5" font-size="10" text-anchor="end" transform="rotate(-45 248 155.5)">18:00</text><text x="275" y="155.5" font-size="10" text-anchor="end" transform="rotate(-45 275 155.5)">30. Nov</text></g></svg><div class="stat" style="top:89px;height:50px">Count: 14<br>Avg: 0.060 s</div></div><div class="panel" style="left:843px;top:350px"><svg class="li" width="14" height="13" viewBox="0 0 14 13"><rect x="0" y="0" width="12" height="3" fill="#222"/><rect x="1" y="1" width="10" height="1" fill="#fff" opacity=".85"/><rect x="1" y="1" width="6" height="1" fill="#222" opacity=".35"/><rect x="0" y="4" width="12" height="3" fill="#222"/><rect x="1" y="5" width="10" height="1" fill="#fff" opacity=".85"/><rect x="1" y="5" width="6" height="1" fill="#222" opacity=".35"/><rect x="0" y="8" width="12" height="3" fill="#222"/><rect x="1" y="9" width="10" height="1" fill="#fff" opacity=".85"/><rect x="1" y="9" width="6" height="1" fill="#222" opacity=".35"/></svg><div class="ttl" style="letter-spacing:0.44px">Mobile App View Navigation</div><svg class="hic" width="410" height="30" viewBox="0 0 410 30"><rect x="299.0" y="20.2" width="2.1" height="3.8" fill="#222"/><rect x="302.5" y="19.0" width="2.1" height="5" fill="#222"/><rect x="306.0" y="17.0" width="2.1" height="7" fill="#222"/><rect x="309.5" y="13.8" width="2.1" height="10.2" fill="#222"/><rect x="313.0" y="10.0" width="2.1" height="14" fill="#222"/><path d="M319.6 11.15h4.600l3.150 3.150v7.900a1 1 0 0 1 -1 1h-6.700a1 1 0 0 1 -1 -1v-10a1 1 0 0 1 1 -1z" fill="none" stroke="#222" stroke-width="1.3" stroke-linejoin="round"/><path d="M324.1 11.3v3.100h3.100" fill="none" stroke="#222" stroke-width="1.1"/><path d="M320.9 16.8l4 4.500m0-4.500l-4 4.500" stroke="#222" stroke-width="1.35" fill="none"/><g transform="translate(330.3 9.1) scale(1 1.0)"><rect x="2.4" y="0" width="2.3" height="2.6" rx=".5" fill="#222"/><rect x="7.800" y="0" width="2.3" height="2.6" rx=".5" fill="#222"/><rect x="0" y="1.7" width="12.6" height="2.1" rx=".6" fill="#222"/><rect x="0" y="4.700" width="12.6" height="9" rx=".8" fill="#222"/><rect x="1.85" y="6.65" width="1.7" height="1.7" fill="#fff"/><rect x="5.45" y="6.65" width="1.7" height="1.7" fill="#fff"/><rect x="9.05" y="6.65" width="1.7" height="1.7" fill="#fff"/><rect x="1.85" y="10.15" width="1.7" height="1.7" fill="#fff"/><rect x="5.45" y="10.15" width="1.7" height="1.7" fill="#fff"/><rect x="9.05" y="10.15" width="1.7" height="1.7" fill="#fff"/></g><circle cx="350.4" cy="15.0" r="4.5" fill="none" stroke="#222" stroke-width="1.7"/><path d="M353.8 18.4L357.6 22.2" stroke="#222" stroke-width="2.1" stroke-linecap="round"/><path d="M348.2 15.0h4.4M350.4 12.8v4.4" stroke="#222" stroke-width="1.3"/><circle cx="367.4" cy="16.75" r="3.77" fill="none" stroke="#222" stroke-width="2.99"/><rect x="365.97" y="10.25" width="2.86" height="2.73" fill="#222" transform="rotate(0 367.4 16.75)"/><rect x="365.97" y="10.25" width="2.86" height="2.73" fill="#222" transform="rotate(45 367.4 16.75)"/><rect x="365.97" y="10.25" width="2.86" height="2.73" fill="#222" transform="rotate(90 367.4 16.75)"/><rect x="365.97" y="10.25" width="2.86" height="2.73" fill="#222" transform="rotate(135 367.4 16.75)"/><rect x="365.97" y="10.25" width="2.86" height="2.73" fill="#222" transform="rotate(180 367.4 16.75)"/><rect x="365.97" y="10.25" width="2.86" height="2.73" fill="#222" transform="rotate(225 367.4 16.75)"/><rect x="365.97" y="10.25" width="2.86" height="2.73" fill="#222" transform="rotate(270 367.4 16.75)"/><rect x="365.97" y="10.25" width="2.86" height="2.73" fill="#222" transform="rotate(315 367.4 16.75)"/><rect x="377.2" y="11.5" width="12.6" height="10.6" rx="1" fill="none" stroke="#222" stroke-width="1.4"/><rect x="376.7" y="11.0" width="13.6" height="4" rx=".8" fill="#222"/><path d="M393.90000000000003 11.9l7.6 7.6m0-7.6l-7.6 7.6" stroke="#222" stroke-width="2.6" fill="none"/></svg><svg class="ch" width="410" height="202" viewBox="0 0 410 202"><rect x="40" y="40" width="236" height="1" fill="#e4e4e4"/><rect x="40" y="91" width="236" height="1" fill="#e4e4e4"/><rect x="208" y="104" width="4" height="36" fill="#fff"/><rect x="217" y="92" width="4" height="48" fill="#fff"/><rect x="222" y="90" width="4" height="50" fill="#fff"/><rect x="209" y="105" width="2" height="35" fill="#ffa200"/><rect x="218" y="93" width="2" height="47" fill="#ffa200"/><rect x="223" y="91" width="2" height="49" fill="#ffa200"/><rect x="40" y="140" width="236" height="1" fill="#c0d0e0"/><rect x="43" y="141" width="1" height="4" fill="#c0d0e0"/><rect x="71" y="141" width="1" height="4" fill="#c0d0e0"/><rect x="100" y="141" width="1" height="4" fill="#c0d0e0"/><rect x="128" y="141" width="1" height="4" fill="#c0d0e0"/><rect x="157" y="141" width="1" height="4" fill="#c0d0e0"/><rect x="185" y="141" width="1" height="4" fill="#c0d0e0"/><rect x="214" y="141" width="1" height="4" fill="#c0d0e0"/><rect x="242" y="141" width="1" height="4" fill="#c0d0e0"/><rect x="271" y="141" width="1" height="4" fill="#c0d0e0"/><g font-size="11" fill="#606060"><text x="24.8" y="44.4" font-size="11.5" letter-spacing=".3" text-anchor="end">10</text><text x="24.8" y="95.4" font-size="11.5" letter-spacing=".3" text-anchor="end">5</text><text x="24.8" y="144.4" font-size="11.5" letter-spacing=".3" text-anchor="end">0</text><text x="47" y="155.5" font-size="10" text-anchor="end" transform="rotate(-45 47 155.5)">28. Nov</text><text x="75" y="155.5" font-size="10" text-anchor="end" transform="rotate(-45 75 155.5)">06:00</text><text x="104" y="155.5" font-size="10" text-anchor="end" transform="rotate(-45 104 155.5)">12:00</text><text x="132" y="155.5" font-size="10" text-anchor="end" transform="rotate(-45 132 155.5)">18:00</text><text x="161" y="155.5" font-size="10" text-anchor="end" transform="rotate(-45 161 155.5)">29. Nov</text><text x="189" y="155.5" font-size="10" text-anchor="end" transform="rotate(-45 189 155.5)">06:00</text><text x="218" y="155.5" font-size="10" text-anchor="end" transform="rotate(-45 218 155.5)">12:00</text><text x="246" y="155.5" font-size="10" text-anchor="end" transform="rotate(-45 246 155.5)">18:00</text><text x="275" y="155.5" font-size="10" text-anchor="end" transform="rotate(-45 275 155.5)">30. Nov</text></g></svg><div class="stat" style="top:89px;height:50px">Count: 10<br>Avg: 4.430 s</div></div><div class="panel" style="left:19px;top:554px"><svg class="li" width="14" height="13" viewBox="0 0 14 13"><rect x="0" y="0" width="12" height="3" fill="#222"/><rect x="1" y="1" width="10" height="1" fill="#fff" opacity=".85"/><rect x="1" y="1" width="6" height="1" fill="#222" opacity=".35"/><rect x="0" y="4" width="12" height="3" fill="#222"/><rect x="1" y="5" width="10" height="1" fill="#fff" opacity=".85"/><rect x="1" y="5" width="6" height="1" fill="#222" opacity=".35"/><rect x="0" y="8" width="12" height="3" fill="#222"/><rect x="1" y="9" width="10" height="1" fill="#fff" opacity=".85"/><rect x="1" y="9" width="6" height="1" fill="#222" opacity=".35"/></svg><div class="ttl" style="letter-spacing:0.68px">Mobile App Uptime</div><svg class="hic" width="410" height="30" viewBox="0 0 410 30"><rect x="299.0" y="20.2" width="2.1" height="3.8" fill="#222"/><rect x="302.5" y="19.0" width="2.1" height="5" fill="#222"/><rect x="306.0" y="17.0" width="2.1" height="7" fill="#222"/><rect x="309.5" y="13.8" width="2.1" height="10.2" fill="#222"/><rect x="313.0" y="10.0" width="2.1" height="14" fill="#222"/><path d="M319.6 11.15h4.600l3.150 3.150v7.900a1 1 0 0 1 -1 1h-6.700a1 1 0 0 1 -1 -1v-10a1 1 0 0 1 1 -1z" fill="none" stroke="#222" stroke-width="1.3" stroke-linejoin="round"/><path d="M324.1 11.3v3.100h3.100" fill="none" stroke="#222" stroke-width="1.1"/><path d="M320.9 16.8l4 4.500m0-4.500l-4 4.500" stroke="#222" stroke-width="1.35" fill="none"/><g transform="translate(330.3 9.1) scale(1 1.0)"><rect x="2.4" y="0" width="2.3" height="2.6" rx=".5" fill="#222"/><rect x="7.800" y="0" width="2.3" height="2.6" rx=".5" fill="#222"/><rect x="0" y="1.7" width="12.6" height="2.1" rx=".6" fill="#222"/><rect x="0" y="4.700" width="12.6" height="9" rx=".8" fill="#222"/><rect x="1.85" y="6.65" width="1.7" height="1.7" fill="#fff"/><rect x="5.45" y="6.65" width="1.7" height="1.7" fill="#fff"/><rect x="9.05" y="6.65" width="1.7" height="1.7" fill="#fff"/><rect x="1.85" y="10.15" width="1.7" height="1.7" fill="#fff"/><rect x="5.45" y="10.15" width="1.7" height="1.7" fill="#fff"/><rect x="9.05" y="10.15" width="1.7" height="1.7" fill="#fff"/></g><circle cx="350.4" cy="15.0" r="4.5" fill="none" stroke="#222" stroke-width="1.7"/><path d="M353.8 18.4L357.6 22.2" stroke="#222" stroke-width="2.1" stroke-linecap="round"/><path d="M348.2 15.0h4.4M350.4 12.8v4.4" stroke="#222" stroke-width="1.3"/><circle cx="367.4" cy="16.75" r="3.77" fill="none" stroke="#222" stroke-width="2.99"/><rect x="365.97" y="10.25" width="2.86" height="2.73" fill="#222" transform="rotate(0 367.4 16.75)"/><rect x="365.97" y="10.25" width="2.86" height="2.73" fill="#222" transform="rotate(45 367.4 16.75)"/><rect x="365.97" y="10.25" width="2.86" height="2.73" fill="#222" transform="rotate(90 367.4 16.75)"/><rect x="365.97" y="10.25" width="2.86" height="2.73" fill="#222" transform="rotate(135 367.4 16.75)"/><rect x="365.97" y="10.25" width="2.86" height="2.73" fill="#222" transform="rotate(180 367.4 16.75)"/><rect x="365.97" y="10.25" width="2.86" height="2.73" fill="#222" transform="rotate(225 367.4 16.75)"/><rect x="365.97" y="10.25" width="2.86" height="2.73" fill="#222" transform="rotate(270 367.4 16.75)"/><rect x="365.97" y="10.25" width="2.86" height="2.73" fill="#222" transform="rotate(315 367.4 16.75)"/><rect x="377.2" y="11.5" width="12.6" height="10.6" rx="1" fill="none" stroke="#222" stroke-width="1.4"/><rect x="376.7" y="11.0" width="13.6" height="4" rx=".8" fill="#222"/><path d="M393.90000000000003 11.9l7.6 7.6m0-7.6l-7.6 7.6" stroke="#222" stroke-width="2.6" fill="none"/></svg><svg class="ch" width="410" height="202" viewBox="0 0 410 202"><rect x="54" y="40" width="222" height="1" fill="#e4e4e4"/><rect x="54" y="74" width="222" height="1" fill="#e4e4e4"/><rect x="54" y="107" width="222" height="1" fill="#e4e4e4"/><rect x="123" y="137" width="4" height="3" fill="#fff"/><rect x="212" y="134" width="4" height="6" fill="#fff"/><rect x="216" y="137" width="4" height="3" fill="#fff"/><rect x="221" y="76" width="4" height="64" fill="#fff"/><rect x="225" y="129" width="4" height="11" fill="#fff"/><rect x="124" y="138" width="2" height="2" fill="#2ca02c"/><rect x="213" y="135" width="2" height="5" fill="#2ca02c"/><rect x="217" y="138" width="2" height="2" fill="#2ca02c"/><rect x="222" y="77" width="2" height="63" fill="#2ca02c"/><rect x="226" y="130" width="2" height="10" fill="#2ca02c"/><rect x="54" y="140" width="222" height="1" fill="#c0d0e0"/><rect x="57" y="141" width="1" height="4" fill="#c0d0e0"/><rect x="84" y="141" width="1" height="4" fill="#c0d0e0"/><rect x="110" y="141" width="1" height="4" fill="#c0d0e0"/><rect x="137" y="141" width="1" height="4" fill="#c0d0e0"/><rect x="164" y="141" width="1" height="4" fill="#c0d0e0"/><rect x="191" y="141" width="1" height="4" fill="#c0d0e0"/><rect x="217" y="141" width="1" height="4" fill="#c0d0e0"/><rect x="244" y="141" width="1" height="4" fill="#c0d0e0"/><rect x="271" y="141" width="1" height="4" fill="#c0d0e0"/><g font-size="11" fill="#606060"><text x="38.8" y="44.4" font-size="11.5" letter-spacing=".3" text-anchor="end">1500</text><text x="38.8" y="78.4" font-size="11.5" letter-spacing=".3" text-anchor="end">1000</text><text x="38.8" y="111.4" font-size="11.5" letter-spacing=".3" text-anchor="end">500</text><text x="38.8" y="144.4" font-size="11.5" letter-spacing=".3" text-anchor="end">0</text><text x="61" y="155.5" font-size="10" text-anchor="end" transform="rotate(-45 61 155.5)">28. Nov</text><text x="88" y="155.5" font-size="10" text-anchor="end" transform="rotate(-45 88 155.5)">06:00</text><text x="114" y="155.5" font-size="10" text-anchor="end" transform="rotate(-45 114 155.5)">12:00</text><text x="141" y="155.5" font-size="10" text-anchor="end" transform="rotate(-45 141 155.5)">18:00</text><text x="168" y="155.5" font-size="10" text-anchor="end" transform="rotate(-45 168 155.5)">29. Nov</text><text x="195" y="155.5" font-size="10" text-anchor="end" transform="rotate(-45 195 155.5)">06:00</text><text x="221" y="155.5" font-size="10" text-anchor="end" transform="rotate(-45 221 155.5)">12:00</text><text x="248" y="155.5" font-size="10" text-anchor="end" transform="rotate(-45 248 155.5)">18:00</text><text x="275" y="155.5" font-size="10" text-anchor="end" transform="rotate(-45 275 155.5)">30. Nov</text></g></svg><div class="stat" style="top:89px;height:50px">Count: 21<br>Avg: 449.925 s</div></div><div class="panel" style="left:431px;top:554px"><div class="add"><svg width="15" height="15" viewBox="0 0 15 15" style="position:absolute;left:149px;top:92px"><path d="M7.3 .5v14M.3 7.5h14" stroke="#3d85c6" stroke-width="3.4"/></svg><span class="addt">Add Metric</span></div></div>
<div class="abs" style="left:8px;top:759px;width:1280px;height:1px;background:#eee"></div>
<div class="abs ft" style="left:474px;top:772px;color:#4a89c8">Home Page</div>
<div class="abs ft" style="left:545px;top:772px;color:#555">|</div>
<div class="abs ft" style="left:561px;top:772px;color:#4a89c8;letter-spacing:.15px">About Company</div>
<div class="abs ft" style="left:655px;top:772px;color:#555">|</div>
<div class="abs ft" style="left:668px;top:772px;color:#4a89c8">Support</div>
<div class="abs ft" style="left:721px;top:772px;color:#555">|</div>
<div class="abs ft" style="left:737px;top:772px;color:#4a89c8">Contact Us</div>
<div class="abs ft" style="left:413px;top:801.500px;color:#333;letter-spacing:-.06px">Copyright © 2006-2018 GERMAIN SOFTWARE LLC. All rights reserved Germain Software.</div>

</body></html>
